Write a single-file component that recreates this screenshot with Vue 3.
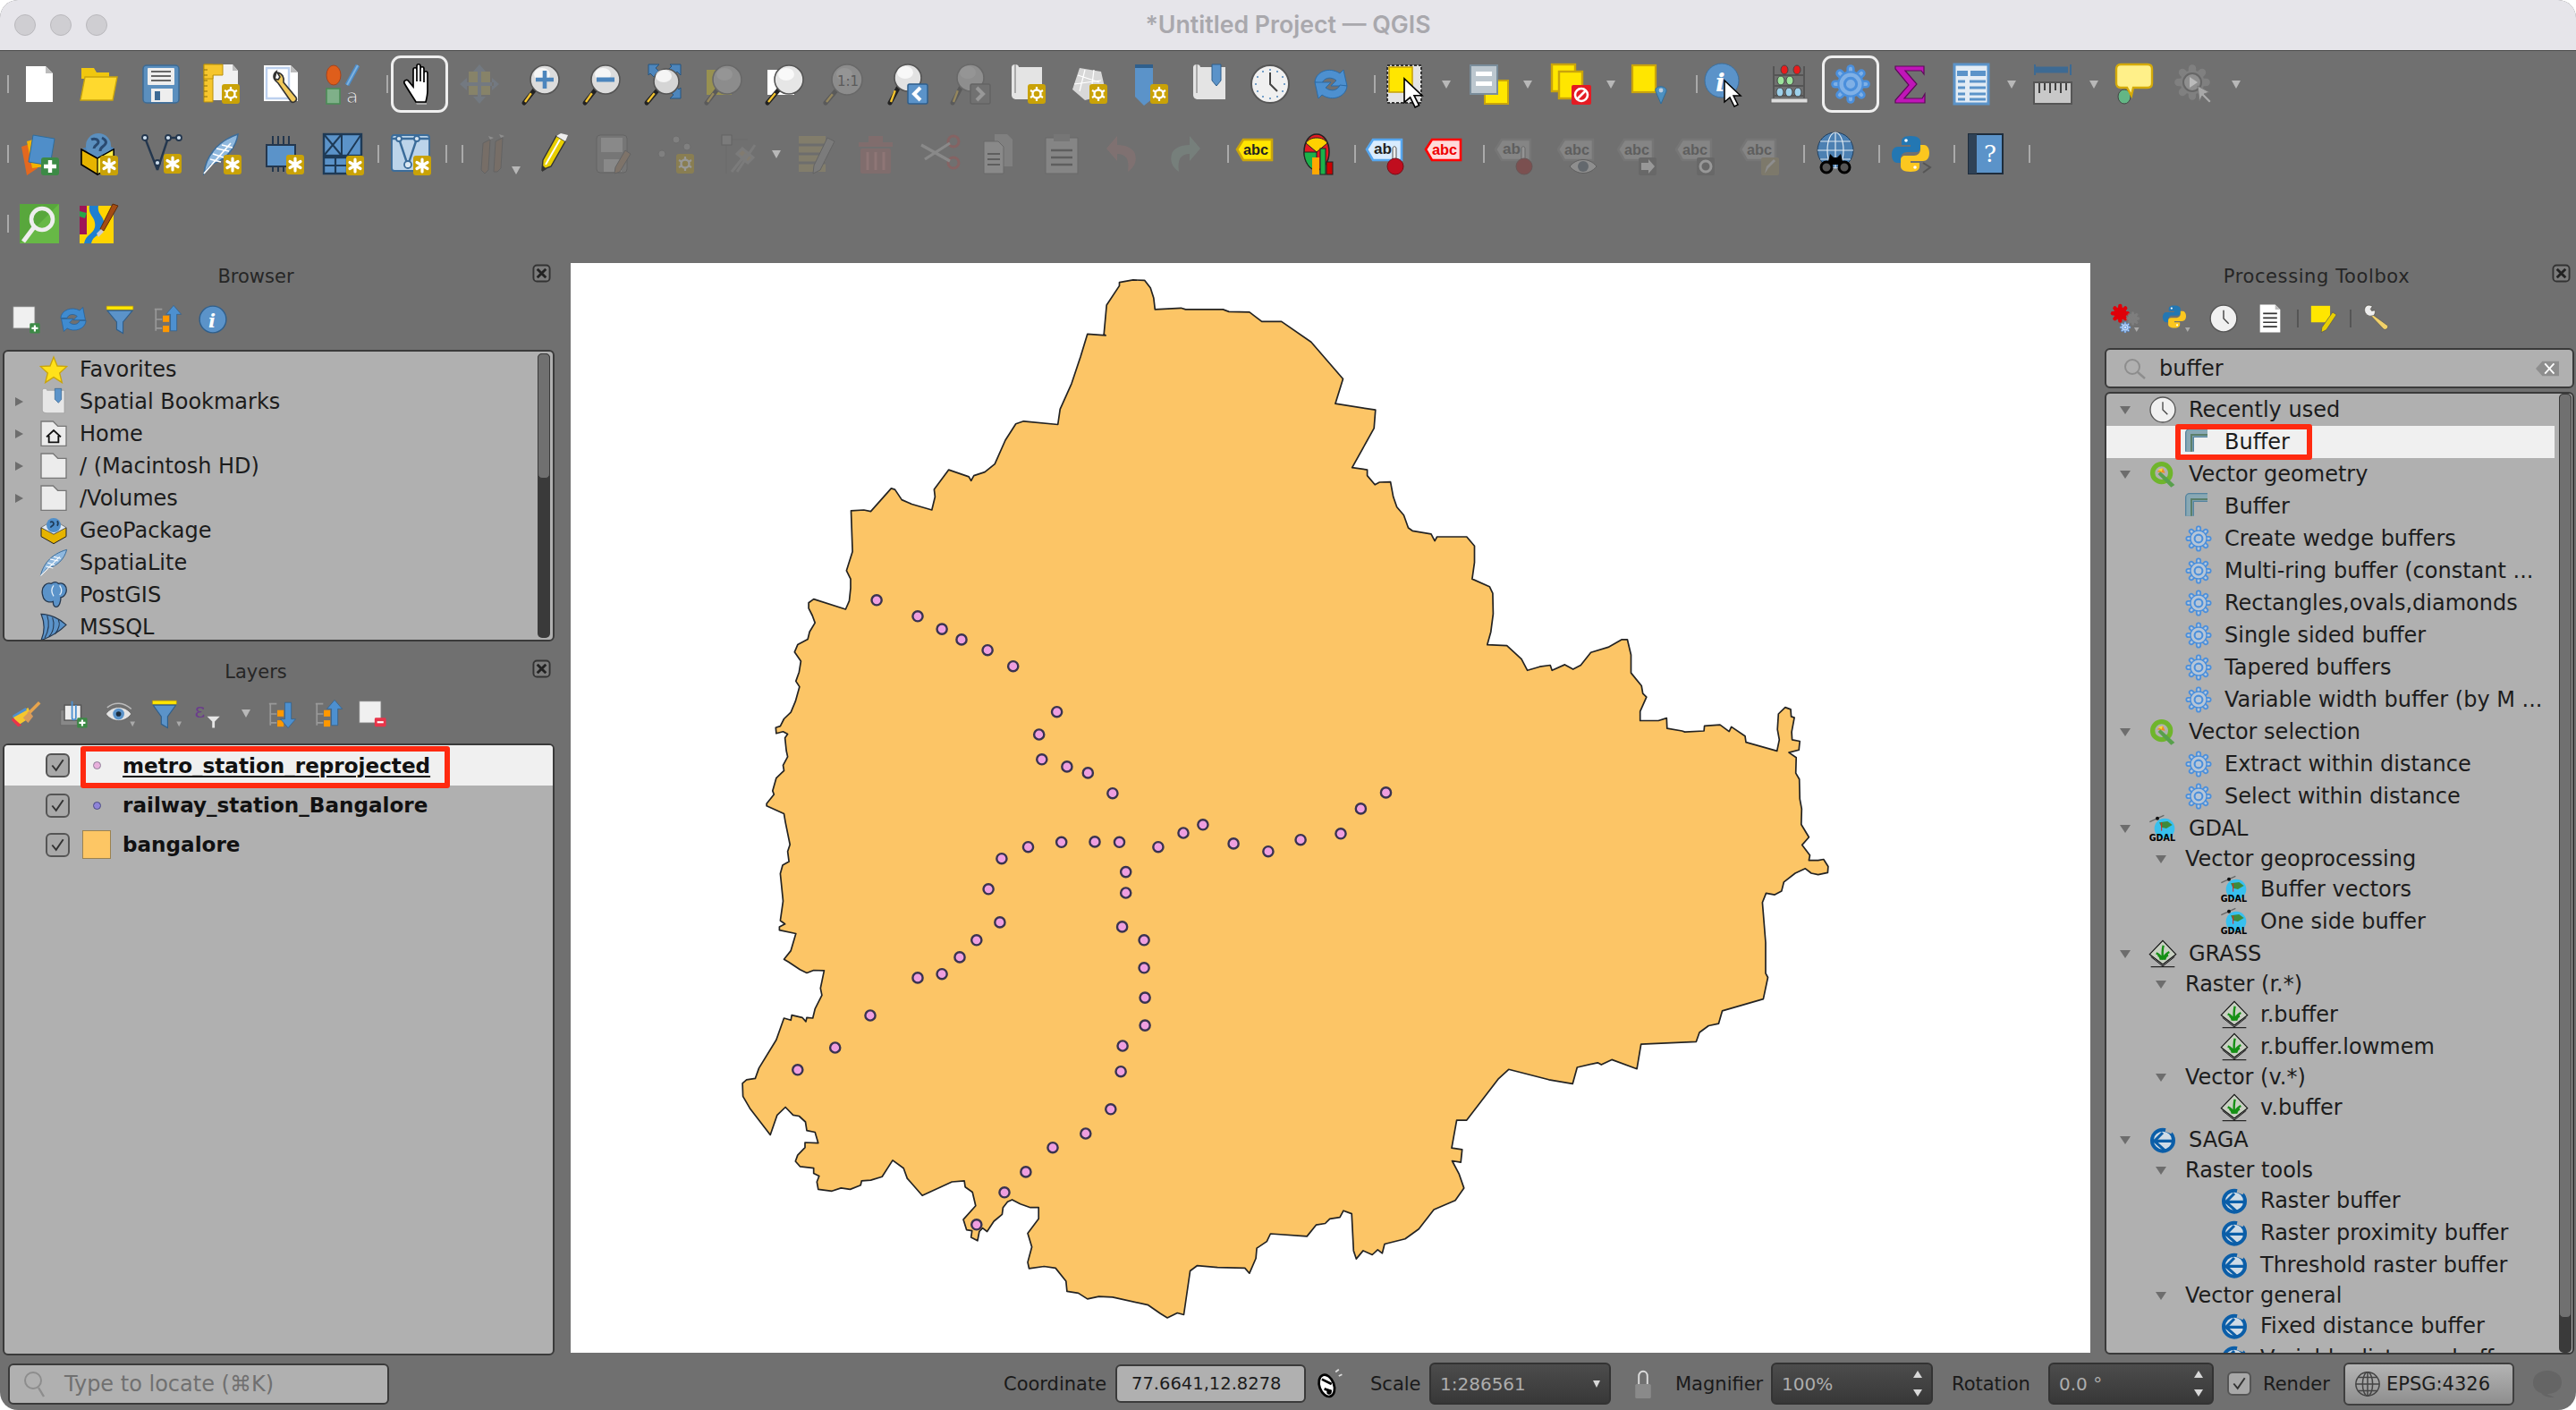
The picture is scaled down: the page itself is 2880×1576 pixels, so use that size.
<template>
  <div class="app">
    <header class="titlebar">
      <div class="lights"><i></i><i></i><i></i></div>
      <div class="title">*Untitled Project — QGIS</div>
    </header>

    <!-- main toolbars -->
    <div class="toolbars">
      <div v-for="(row, r) in toolbarRows" :key="r" class="tool-row">
        <template v-for="item in row" :key="item.key">
          <span v-if="item.name === 'sep'" class="sep" :style="{ marginLeft: item.ml + 'px' }"></span>
          <span v-else-if="item.name === 'arrow'" class="menu-arrow" :style="{ marginLeft: item.ml + 'px' }"></span>
          <span v-else-if="item.name === 'arrowlow'" class="menu-arrow low" :style="{ marginLeft: item.ml + 'px' }"></span>
          <svg
            v-else
            class="tool-icon"
            :class="{ dim: dimIcons.has(item.name), active: item.name === 'hand' || item.name === 'procgear' }"
            :style="{ marginLeft: item.ml + 'px' }"
            viewBox="0 0 48 48"
            v-html="icons[item.name]"
          ></svg>
        </template>
      </div>
    </div>

    <div class="workspace">
      <!-- left docks -->
      <aside class="dock left">
        <div class="dock-title"><span>Browser</span><svg class="close" viewBox="0 0 22 22" v-html="closeIcon"></svg></div>
        <div class="dock-tools browser-tools">
          <template v-for="item in browserTools" :key="item.key">
            <svg class="small-icon" :style="{ marginLeft: item.ml + 'px' }" viewBox="0 0 48 48" v-html="icons[item.name]"></svg>
          </template>
        </div>
        <div class="tree browser-tree">
          <div v-for="row in browserRows" :key="row.text" class="browser-row">
            <span class="twist" :class="{ closed: row.arrow }"></span>
            <svg class="row-icon" viewBox="0 0 48 48" v-html="icons[row.icon]"></svg>
            <span class="row-text">{{ row.text }}</span>
          </div>
          <div class="scrollbar"><div class="thumb browser-thumb"></div></div>
        </div>

        <div class="dock-title layers-title"><span>Layers</span><svg class="close" viewBox="0 0 22 22" v-html="closeIcon"></svg></div>
        <div class="dock-tools layer-tools">
          <template v-for="item in layerTools" :key="item.key">
            <span v-if="item.name === 'arrow'" class="menu-arrow" :style="{ marginLeft: item.ml + 'px' }"></span>
            <svg v-else class="small-icon" :style="{ marginLeft: item.ml + 'px' }" viewBox="0 0 48 48" v-html="icons[item.name]"></svg>
          </template>
        </div>
        <div class="tree layer-tree">
          <div v-for="(layer, i) in layers" :key="layer.name" class="layer-row" :class="{ selected: i === 0 }">
            <span class="check"><svg viewBox="0 0 26 26"><path d="M6 13l5 6 9-13" fill="none" stroke="#333" stroke-width="2.2" /></svg></span>
            <span class="symbol">
              <span v-if="layer.swatch" class="swatch"></span>
              <span v-else class="dot" :class="layer.dot"></span>
            </span>
            <span class="layer-name" :class="{ underlined: i === 0 }">{{ layer.name }}</span>
            <span v-if="i === 0" class="red-box layer-red"></span>
          </div>
        </div>
      </aside>

      <!-- map canvas -->
      <main class="canvas">
        <svg class="map" viewBox="638 294 1699 1218">
          <path :d="outline" fill="#fcc566" stroke="#232323" stroke-width="1.7" stroke-linejoin="round" />
          <circle
            v-for="(p, i) in stations"
            :key="i"
            :cx="p[0]"
            :cy="p[1]"
            r="5.6"
            fill="#ef9fe0"
            stroke="#3a3350"
            stroke-width="2.4"
          />
        </svg>
      </main>

      <!-- processing toolbox -->
      <aside class="dock right">
        <div class="dock-title"><span>Processing Toolbox</span><svg class="close" viewBox="0 0 22 22" v-html="closeIcon"></svg></div>
        <div class="dock-tools toolbox-tools">
          <template v-for="item in toolboxTools" :key="item.key">
            <span v-if="item.name === 'sep'" class="sep dark" :style="{ marginLeft: item.ml + 'px' }"></span>
            <svg v-else class="small-icon" :style="{ marginLeft: item.ml + 'px' }" viewBox="0 0 48 48" v-html="icons[item.name]"></svg>
          </template>
        </div>
        <div class="search">
          <svg class="search-icon" viewBox="0 0 26 26"><circle cx="11" cy="11" r="8" fill="none" stroke="#8d8d8d" stroke-width="2" /><path d="M17 17l8 7" stroke="#8d8d8d" stroke-width="2.4" /></svg>
          <span class="search-text">buffer</span>
          <svg class="clear" viewBox="0 0 28 18"><path d="M0 9L8 0h20v18H8z" fill="#8e8e8e" /><path d="M11 3l11 12M22 3L11 15" stroke="#fff" stroke-width="2" /></svg>
        </div>
        <div class="tree toolbox-tree">
          <div v-for="row in toolboxRows" :key="row.key" class="tb-row" :class="['lv-' + row.level, { selected: row.sel }]">
            <span v-if="row.level === 0 || row.level === 'sub'" class="twist open"></span>
            <svg v-if="row.icon" class="row-icon" viewBox="0 0 48 48" v-html="icons[row.icon]"></svg>
            <span class="row-text">{{ row.text }}</span>
            <span v-if="row.sel" class="red-box tb-red"></span>
          </div>
          <div class="scrollbar tb-scroll"><div class="thumb tb-thumb"></div></div>
        </div>
      </aside>
    </div>

    <footer class="statusbar">
      <div class="locator">
        <svg class="loc-icon" viewBox="0 0 26 34"><circle cx="12" cy="13" r="9" fill="none" stroke="#8d8d8d" stroke-width="2" /><path d="M18 21l6 10" stroke="#8d8d8d" stroke-width="2.4" /></svg>
        <span>Type to locate (⌘K)</span>
      </div>
      <span class="st-label coord-label">Coordinate</span>
      <div class="coord-input">77.6641,12.8278</div>
      <svg class="mouse-icon" viewBox="0 0 34 40" v-html="mouseIcon"></svg>
      <span class="st-label scale-label">Scale</span>
      <div class="dark-field scale-field"><span>1:286561</span><i class="combo-arrow"></i></div>
      <svg class="lock-icon" viewBox="0 0 24 40"><path d="M6 20V9c0-9 12-9 12 0v11" fill="none" stroke="#ddd" stroke-width="2.4" /><rect x="1" y="20" width="22" height="20" rx="2" fill="#8a8a8a" /></svg>
      <span class="st-label mag-label">Magnifier</span>
      <div class="dark-field mag-field"><span>100%</span><i class="spin"></i></div>
      <span class="st-label rot-label">Rotation</span>
      <div class="dark-field rot-field"><span>0.0 °</span><i class="spin"></i></div>
      <span class="check render-check"><svg viewBox="0 0 26 26"><path d="M6 13l5 6 9-13" fill="none" stroke="#333" stroke-width="2.2" /></svg></span>
      <span class="st-label render-label">Render</span>
      <div class="epsg">
        <svg viewBox="0 0 32 32" v-html="crsIcon"></svg>
        <span>EPSG:4326</span>
      </div>
      <svg class="msg-icon" viewBox="0 0 34 32"><path d="M17 1c9 0 16 5 16 13s-7 13-16 13h-1l9 4c-8 0-13-2-15-5C4 24 1 20 1 14 1 6 8 1 17 1z" fill="#656565" /></svg>
    </footer>
  </div>
</template>

<script setup>
// --- small svg helpers for the qgis icon set (48 x 48 grid) ---
const badge = (x = 27, y = 25) => {
  const cx = x + 10
  const cy = y + 11
  return `<rect x="${x}" y="${y}" width="20" height="22" rx="3" fill="#c9a207"/><path d="M${cx} ${cy - 7}v14M${cx - 6} ${cy - 3.5}l12 7M${cx - 6} ${cy + 3.5}l12-7" stroke="#fff" stroke-width="3.2" stroke-linecap="round"/>`
}
const gearBadge = (x = 27, y = 25) => {
  const cx = x + 10
  const cy = y + 11
  return `<rect x="${x}" y="${y}" width="20" height="22" rx="3" fill="#c9a207"/><path d="M${cx} ${cy - 8}v16M${cx - 7} ${cy - 4}l14 8M${cx - 7} ${cy + 4}l14-8" stroke="#fff" stroke-width="2.2"/><circle cx="${cx}" cy="${cy}" r="4.5" fill="#c9a207" stroke="#fff" stroke-width="2.4"/>`
}
const lens = (fill = '#dcdcdc', cx = 27, cy = 19, r = 16) =>
  `<path d="M${cx - r * 0.7} ${cy + r * 0.7}L4 45" stroke="#222" stroke-width="5" stroke-linecap="round"/><path d="M${cx - r * 0.95} ${cy + r * 0.95}L5 44" stroke="#f4c430" stroke-width="2.4"/><circle cx="${cx}" cy="${cy}" r="${r}" fill="${fill}" stroke="#555" stroke-width="1.6"/><ellipse cx="${cx - 3}" cy="${cy - 6}" rx="9" ry="7" fill="#fff" opacity=".75"/>`
const cog = (cx, cy, R, line = '#4a8fdc', fill = '#b6c6d8') => {
  let out = ''
  for (let a = 0; a < 8; a++) {
    const t = (a * Math.PI) / 4
    const x = (cx + Math.cos(t) * R * 0.78).toFixed(1)
    const y = (cy + Math.sin(t) * R * 0.78).toFixed(1)
    out += `<path d="M${cx} ${cy}L${x} ${y}" stroke="${line}" stroke-width="${R * 0.42}" stroke-linecap="round"/>`
  }
  for (let a = 0; a < 8; a++) {
    const t = (a * Math.PI) / 4
    const x = (cx + Math.cos(t) * R * 0.78).toFixed(1)
    const y = (cy + Math.sin(t) * R * 0.78).toFixed(1)
    out += `<path d="M${cx} ${cy}L${x} ${y}" stroke="${fill}" stroke-width="${R * 0.18}" stroke-linecap="round"/>`
  }
  return `${out}<circle cx="${cx}" cy="${cy}" r="${R * 0.62}" fill="${fill}" stroke="${line}" stroke-width="${R * 0.1}"/><circle cx="${cx}" cy="${cy}" r="${R * 0.3}" fill="none" stroke="${line}" stroke-width="${R * 0.14}"/>`
}
const cursor = (x, y, s = 1) =>
  `<path transform="translate(${x} ${y}) scale(${s})" d="M0 0v24l6-5 5 10 4-2-5-10h8z" fill="#fff" stroke="#000" stroke-width="1.5"/>`
const abcTag = (word, fill, edge, ink, tx = 8, ty = 25) =>
  `<path d="M1 19L8 8h32v23H8z" fill="${fill}" stroke="${edge}" stroke-width="2.6"/><text x="${tx}" y="${ty}" font-family="Liberation Sans" font-size="16" font-weight="700" fill="${ink}" textLength="28" lengthAdjust="spacingAndGlyphs">${word}</text>`
const python =
  '<g><path d="M24 4c-8 0-10 3-10 6v4h10v2H10c-4 0-7 3-7 9s3 9 6 9h4v-5c0-4 3-7 7-7h10c3 0 5-2 5-5v-7c0-3-3-6-11-6z" fill="#2377b3"/><circle cx="19" cy="9" r="1.8" fill="#fff"/></g><g transform="rotate(180 24 24)"><path d="M24 4c-8 0-10 3-10 6v4h10v2H10c-4 0-7 3-7 9s3 9 6 9h4v-5c0-4 3-7 7-7h10c3 0 5-2 5-5v-7c0-3-3-6-11-6z" fill="#fcc71f"/><circle cx="19" cy="9" r="1.8" fill="#fff"/></g>'
const clock = (r = 20) =>
  `<circle cx="24" cy="24" r="${r}" fill="#f0f0f0" stroke="#555" stroke-width="2"/><path d="M24 11v13l8 8" fill="none" stroke="#444" stroke-width="2"/>`

const icons = {
  new: '<path d="M9 4h22l8 8v32H9z" fill="#fff"/><path d="M31 4l8 8h-8z" fill="#bbb"/>',
  open: '<path d="M4 6h14l3 5h14v7H4z" fill="#f0c70f"/><path d="M8 16h36l-5 26H3z" fill="#ffd92e" stroke="#c9a40c" stroke-width="1.4"/>',
  save: '<rect x="4" y="3" width="40" height="42" rx="4" fill="#5b8fbe" stroke="#3c6a94" stroke-width="1.5"/><rect x="9" y="6" width="30" height="19" rx="1" fill="#eee"/><path d="M13 10h22M13 15h22M13 20h22" stroke="#666" stroke-width="2"/><rect x="13" y="29" width="24" height="15" fill="#eee"/><rect x="17" y="32" width="6" height="10" fill="#3c6a94"/>',
  layout: `<path d="M6 2h30l6 7v33H6z" fill="#fff" opacity=".9"/><path d="M36 2l6 7h-6z" fill="#bbb"/><path d="M4 2h10v42H4z" fill="#f6c62d" stroke="#b8900b"/><path d="M4 2h21v12H14v4H4z" fill="#f6c62d" stroke="#b8900b"/><path d="M4 8h4M4 14h4M4 20h4M4 26h4M4 32h4M4 38h4" stroke="#8a6d07" stroke-width="1.2"/>${gearBadge(24, 24)}`,
  layoutmgr: '<path d="M4 3h30l8 8v32H4z" fill="#fff"/><path d="M34 3l8 8h-8z" fill="#bbb"/><path d="M7 6h25v34H7z" fill="none" stroke="#bcd0ee" stroke-width="2.4"/><path d="M18 10c-4 3-4 8 0 11l2 2 14 20c2 3 8 0 6-4L26 22c1-5-1-10-7-11l3 5-2 3-4-1z" fill="#f1c95b" stroke="#333" stroke-width="1.6"/>',
  stylemgr: '<ellipse cx="13" cy="14" rx="8" ry="11" fill="#df5e1b" stroke="#a8431a"/><path d="M28 25L40 3" stroke="#4d8bc6" stroke-width="5"/><path d="M28 25L40 3" stroke="#7fb3e0" stroke-width="2"/><rect x="5" y="29" width="15" height="17" fill="#7fb089" stroke="#4b8b57" stroke-width="1.6"/><text x="27" y="45" font-family="DejaVu Sans" font-size="22" fill="#e8e8e8" stroke="#555" stroke-width=".6">a</text>',
  hand: '<path d="M20 44C17 39 9 27 7 23c-1-3 3-5 5-2l5 6V8c0-3 4-3 4 0v13V4c0-3 4-3 4 0v17V7c0-3 4-3 4 0v15V12c0-3 4-3 4 0v19c0 5-1 9-2 13z" fill="#fff" stroke="#000" stroke-width="1.7"/><path d="M20 45h12v2H21z" fill="#aaa"/>',
  pansel: '<rect x="12" y="10" width="24" height="26" fill="#c2b45a"/><path d="M24 2l7 8H17zM24 46l-7-8h14zM2 24l8-7v14zM46 24l-8-7v14zM22 10h4v28h-4zM8 22h32v4H8z" fill="#7b93ad"/>',
  zoomin: `${lens()}<path d="M27 9v20M17 19h20" stroke="#4d86bd" stroke-width="4.6"/>`,
  zoomout: `${lens()}<path d="M17 19h20" stroke="#4d86bd" stroke-width="5"/>`,
  zoomfull: `<path d="M6 2h12l-4 4 6 6-6 6-6-6-2 2zM42 2v12l-4-4-6 6-6-6 6-6-2-2zM42 40H30l4-4-6-6 6-6 6 6 2-2z" fill="#4d86bd" stroke="#27557f"/>${lens('#d5d5d5', 26, 21, 14)}`,
  zoomsel: `<rect x="4" y="8" width="28" height="28" fill="#ffe600"/>${lens('#d5d5d5', 27, 19, 16)}`,
  zoomlayer: `<rect x="4" y="8" width="30" height="28" fill="#fff"/>${lens('#e6e6e6', 28, 19, 16)}`,
  zoomnative: `${lens('#d5d5d5', 28, 19, 17)}<text x="17" y="26" font-family="DejaVu Sans" font-size="15" fill="#222">1:1</text>`,
  zoomlast: `${lens('#e2e2e2', 24, 17, 15)}<rect x="24" y="24" width="22" height="22" rx="2" fill="#5b93c9" stroke="#2f5f8c" stroke-width="1.5"/><path d="M38 28l-7 7 7 7" fill="none" stroke="#fff" stroke-width="4"/>`,
  zoomnext: `${lens('#dcdcdc', 24, 17, 15)}<rect x="24" y="24" width="22" height="22" rx="2" fill="#777" stroke="#444" stroke-width="1.5"/><path d="M31 28l7 7-7 7" fill="none" stroke="#fff" stroke-width="4"/>`,
  newmap: `<path d="M6 5c0-4 8-4 8 0h26v36H12c-4 0-6-2-6-5z" fill="#e4e4e4"/><path d="M10 2v32" stroke="#aaa" stroke-width="2"/>${gearBadge(24, 24)}`,
  new3d: `<path d="M14 6l24 4 6 26-24 6L6 30z" fill="#d8d8d8"/><path d="M12 14l24 8M20 8l-6 24M30 8l-4 32M8 24l30-4" stroke="#fff" stroke-width="1.2" fill="none"/>${gearBadge(25, 24)}`,
  newbook: `<path d="M8 2h20v38l-10 8-10-10z" fill="#5b93c9"/><path d="M8 2h20v4H8z" fill="#2f5f8c"/>${gearBadge(25, 24)}`,
  showbook: '<path d="M6 5c0-4 8-4 8 0h28v36H12c-4 0-6-2-6-5z" fill="#e4e4e4"/><path d="M10 2v32" stroke="#aaa" stroke-width="2"/><path d="M27 2h10v18l-5 6-5-6z" fill="#5b93c9" stroke="#2f5f8c"/>',
  clock: `${clock(21)}<g fill="#4d86bd"><circle cx="24" cy="8" r="1"/><circle cx="40" cy="24" r="1"/><circle cx="24" cy="40" r="1"/><circle cx="8" cy="24" r="1"/><circle cx="32" cy="10" r="1"/><circle cx="38" cy="16" r="1"/><circle cx="38" cy="32" r="1"/><circle cx="32" cy="38" r="1"/><circle cx="16" cy="38" r="1"/><circle cx="10" cy="32" r="1"/><circle cx="10" cy="16" r="1"/><circle cx="16" cy="10" r="1"/></g>`,
  refresh: '<path d="M6 22C7 10 22 4 34 12l4-4 4 18H24l6-6c-6-5-14-3-16 3z" fill="#4d90d0" stroke="#2b6ba6"/><path d="M42 26c-1 12-16 18-28 10l-4 4-4-18h18l-6 6c6 5 14 3 16-3z" fill="#4d90d0" stroke="#2b6ba6"/>',
  select: `<rect x="3" y="3" width="38" height="42" fill="#e4e4e4" stroke="#333" stroke-width="2" stroke-dasharray="3 2"/><rect x="5" y="5" width="26" height="28" fill="#ffe600" stroke="#c9a40c" stroke-width="1.6"/>${cursor(22, 18, 1.1)}`,
  selectby: '<rect x="20" y="20" width="26" height="26" fill="#ffe600" stroke="#c9a40c" stroke-width="2"/><rect x="4" y="3" width="30" height="32" fill="#bcc7cf" stroke="#7a8d9b" stroke-width="2"/><path d="M10 10h18v5H10zM10 21h18v5H10z" fill="#fff"/>',
  deselect: '<rect x="3" y="2" width="26" height="30" fill="#ffe600" stroke="#c9a40c" stroke-width="2.4"/><rect x="11" y="10" width="26" height="30" fill="#ffe600" stroke="#c9a40c" stroke-width="2.4"/><rect x="25" y="25" width="22" height="22" rx="2" fill="#e41b23"/><circle cx="36" cy="36" r="7" fill="none" stroke="#fff" stroke-width="2.6"/><path d="M31 41l10-10" stroke="#fff" stroke-width="2.6"/>',
  selectloc: '<rect x="4" y="3" width="26" height="30" fill="#ffe600" stroke="#c9a40c" stroke-width="2.2"/><path d="M36 46l-6-14c-2-7 13-7 12 0z" fill="#4d90c0" stroke="#2f6d9c"/><circle cx="36" cy="31" r="2.4" fill="#bcd"/>',
  identify: `<circle cx="20" cy="20" r="19" fill="#5b93c9" stroke="#3a6f9f"/><text x="13" y="32" font-family="DejaVu Serif" font-style="italic" font-weight="700" font-size="28" fill="#fff">i</text>${cursor(23, 20, 1)}`,
  abacus: '<path d="M7 4v38M41 4v38M7 14h34M7 26h34M7 37h34" stroke="#555" stroke-width="2"/><rect x="4" y="40" width="41" height="5" fill="#ddd" stroke="#666"/><g stroke="#444"><ellipse cx="19" cy="8" rx="4" ry="5" fill="#e81c1c"/><ellipse cx="33" cy="8" rx="4" ry="5" fill="#e81c1c"/><ellipse cx="15" cy="20" rx="4" ry="5" fill="#9ce39c"/><ellipse cx="25" cy="20" rx="4" ry="5" fill="#9ce39c"/><ellipse cx="14" cy="33" rx="4" ry="5" fill="#9dd0ea"/><ellipse cx="24" cy="33" rx="4" ry="5" fill="#9dd0ea"/><ellipse cx="34" cy="33" rx="4" ry="5" fill="#9dd0ea"/></g>',
  procgear: cog(24, 24, 22, '#4a8fdc', '#7fb0e6'),
  sigma: '<path d="M7 4h32v9l-3-4H18l13 15-14 16h20l3-5v10H7v-3l15-17L7 7z" fill="#c015b8" stroke="#5d0a5a" stroke-width="1.2"/>',
  table: '<rect x="5" y="2" width="38" height="44" fill="#e3ecf5" stroke="#5b93c9" stroke-width="3"/><path d="M8 9h12v6H8zM23 9h17v6H23z" fill="#5b93c9"/><path d="M9 21h8M22 21h18M9 28h8M22 28h18M9 35h8M22 35h18M9 41h8M22 41h18" stroke="#5b93c9" stroke-width="3"/>',
  ruler: '<path d="M5 8h36" stroke="#3d6a93" stroke-width="7"/><path d="M4 2v12M44 2v12" stroke="#3d6a93" stroke-width="2"/><rect x="3" y="22" width="42" height="24" fill="#c8c8c8" stroke="#555" stroke-width="2"/><path d="M9 23v11M15 23v8M21 23v11M27 23v8M33 23v11M39 23v8" stroke="#333" stroke-width="1.8"/>',
  tip: '<ellipse cx="12" cy="38" rx="7" ry="8" fill="#63b685" stroke="#444"/><path d="M8 2h30c3 0 5 2 5 5v16c0 3-2 5-5 5H22l-2 9-5-9H8c-3 0-5-2-5-5V7c0-3 2-5 5-5z" fill="#fff089" stroke="#d4aa0a" stroke-width="2.4"/>',
  action: `<g opacity=".7">${cog(22, 22, 20, '#888', '#888')}</g><circle cx="22" cy="22" r="10" fill="#8f8f8f" stroke="#666" stroke-width="2"/><path d="M19 16v12l9-6z" fill="#bbb"/><path d="M28 26l2 17 3-6 8 8 2-2-8-8 6-2z" fill="#a8a8a8" stroke="#777"/>`,
  source: '<path d="M4 16l12-4 6 28-12 8z" fill="#e3681f"/><path d="M10 10l14-4 6 32-14 2z" fill="#f3b200"/><path d="M17 3l24 4-5 30-24-4z" fill="#4f8ec9" stroke="#2f6d9c"/><rect x="26" y="28" width="20" height="20" rx="3" fill="#3c8a46"/><path d="M36 31v14M29 38h14" stroke="#fff" stroke-width="4.4"/>',
  gpkg: `<path d="M4 18l22-8 14 8-18 9z" fill="#4b80b4"/><circle cx="22" cy="15" r="14" fill="#5b8fbe"/><path d="M14 8c4-2 8 0 8 3s-5 3-5 7M26 6c4 2 6 5 3 8s-5 3-5 7" fill="none" stroke="#2a4a70" stroke-width="3"/><path d="M3 19l18 10 18-10v18L21 47 3 36z" fill="#e6b400" stroke="#000" stroke-width="1.6"/><path d="M21 29v18L39 37V19z" fill="#ffef4a" stroke="#000" stroke-width="1.2"/>${badge(24, 26)}`,
  vector: `<path d="M5 6l14 36M19 42L31 6M31 6h12" fill="none" stroke="#24374e" stroke-width="2.4"/><g fill="#cfe0ef" stroke="#24374e" stroke-width="1.8"><circle cx="5" cy="6" r="3"/><circle cx="19" cy="34" r="3"/><circle cx="31" cy="6" r="3"/><circle cx="43" cy="6" r="3"/></g>${badge(26, 24)}`,
  spatialite: `<path d="M4 46C6 28 18 10 42 2 40 16 30 30 12 36z" fill="#8fb8de" stroke="#3b6c9a" stroke-width="1.5"/><path d="M4 46L34 12M14 24l12 4M18 18l14 3M24 14l12 3M11 30l12 3" stroke="#fff" stroke-width="1.6"/>${badge(26, 25)}`,
  spatialiteplain: '<path d="M2 46C6 28 18 10 46 2 42 18 30 30 12 34z" fill="#8fb8de" stroke="#3b6c9a" stroke-width="1.5"/><path d="M2 46L34 14M14 24l12 4M18 18l14 3M24 14l12 3M11 30l12 3" stroke="#fff" stroke-width="1.6"/>',
  temp: `<rect x="4" y="14" width="32" height="24" fill="#5b93c9" stroke="#24374e" stroke-width="2"/><path d="M11 4v10M17 4v10M23 4v10M29 4v10M11 38v6M17 38v6M23 38v6" stroke="#24374e" stroke-width="2"/>${badge(26, 25)}`,
  virtual: `<rect x="2" y="2" width="42" height="24" fill="#5b93c9" stroke="#1e3a56" stroke-width="2.4"/><path d="M22 2v24M2 2l20 24M22 2L2 26M44 2L28 26" stroke="#1e3a56" stroke-width="2"/><rect x="2" y="28" width="26" height="18" fill="#5b93c9" stroke="#1e3a56" stroke-width="2.4"/><path d="M15 28v18M2 37h26" stroke="#1e3a56" stroke-width="2.2"/>${badge(27, 26)}`,
  mesh: `<rect x="3" y="3" width="42" height="40" rx="3" fill="#bcd4ea" stroke="#3b6c9a" stroke-width="1.8"/><path d="M11 7l10 30M21 37L31 7M3 7h42" fill="none" stroke="#3b6c9a" stroke-width="2.4"/><g fill="#dbe8f3" stroke="#3b6c9a" stroke-width="1.8"><circle cx="11" cy="7" r="3"/><circle cx="21" cy="36" r="4"/><circle cx="31" cy="7" r="3"/></g>${badge(27, 26)}`,
  pencils: '<path d="M8 42l2-30 8-4-2 34-4 4zM22 44l2-34 8-4-2 34-4 4z" fill="#8a6a50" stroke="#444"/><path d="M18 8l-2-4 6 2M30 6l-2-4 6 2" fill="#ddd"/>',
  pencil: '<path d="M26 4l10 6-16 28-10 4 1-11z" fill="#e8cf00" stroke="#333" stroke-width="1.4"/><path d="M26 4l10 6 3-7-8-2z" fill="#eee"/><path d="M30 8L14 36" stroke="#fff" stroke-width="2"/><path d="M10 36v8l5-3z" fill="#333"/>',
  saveedit: '<rect x="4" y="3" width="34" height="42" rx="4" fill="#888" stroke="#444"/><rect x="9" y="6" width="24" height="16" fill="#ccc"/><rect x="12" y="30" width="20" height="14" fill="#ccc"/><path d="M36 20l6 4-12 20-6 2 1-7z" fill="#a47c5a" stroke="#444"/>',
  digitize: `<g fill="#aaa" stroke="#666"><circle cx="24" cy="8" r="4"/><circle cx="36" cy="16" r="4"/><circle cx="8" cy="24" r="4"/></g>${gearBadge(24, 24)}`,
  vertex: '<path d="M12 6v40M12 8h24" stroke="#666" stroke-width="1.6"/><rect x="7" y="3" width="11" height="11" fill="#999" stroke="#444"/><path d="M18 44l16-20M30 18l12 10-6 6-12-10zM44 14L24 44" stroke="#999" stroke-width="3" fill="#b09a70"/>',
  attredit: '<rect x="2" y="4" width="30" height="40" fill="#b0a060"/><path d="M2 14h30M2 24h30M2 34h30" stroke="#666" stroke-width="3"/><path d="M34 6l8 4-16 32-8 4 1-9z" fill="#999" stroke="#444"/>',
  trash: '<rect x="5" y="18" width="34" height="28" rx="2" fill="#a66"/><path d="M3 11h38v5H3zM14 4h16v7H14z" fill="#a66"/><path d="M13 22v20M22 22v20M31 22v20" stroke="#d88" stroke-width="3"/>',
  cut: '<circle cx="38" cy="10" r="6" fill="none" stroke="#b44" stroke-width="3"/><circle cx="38" cy="34" r="6" fill="none" stroke="#b44" stroke-width="3"/><path d="M2 14l32 18M6 30l28-18" stroke="#ccc" stroke-width="3.2"/>',
  copy: '<path d="M18 2h14l6 6v30H18z" fill="#aaa"/><path d="M6 10h16l6 6v30H6z" fill="#ccc" stroke="#555"/><path d="M10 24h14M10 30h14M10 36h14" stroke="#333" stroke-width="2"/>',
  paste: '<rect x="6" y="6" width="36" height="40" fill="#bbb" stroke="#555"/><rect x="15" y="2" width="18" height="8" fill="#888"/><path d="M12 20h24M12 28h24M12 36h24" stroke="#333" stroke-width="2.4"/>',
  undo: '<path d="M16 4L4 18l12 14v-8c10 0 14 6 12 20 8-6 10-12 8-20-2-6-10-10-20-10z" fill="#a77" />',
  redo: '<path d="M32 4l12 14-12 14v-8C22 24 18 30 20 44c-8-6-10-12-8-20 2-6 10-10 20-10z" fill="#8a9" />',
  abc: abcTag('abc', '#ffe500', '#c9a40c', '#222'),
  diagram: '<path d="M22 2c8 0 14 8 14 20 0 10-6 20-14 20S8 32 8 22C8 10 14 2 22 2z" fill="#e41b23" stroke="#222" stroke-width="1.5"/><path d="M22 22L8 22C8 32 14 42 22 42z" fill="#1bb14a" stroke="#222"/><path d="M22 22L10 12C14 4 30 4 34 12z" fill="#ffd000" stroke="#222"/><rect x="17" y="28" width="8" height="19" fill="#ffa800"/><rect x="26" y="18" width="6" height="29" fill="#1bb14a" stroke="#222"/><rect x="33" y="33" width="7" height="14" fill="#c00" stroke="#222"/>',
  pin: `${abcTag('ab', '#d9ecff', '#56a6ee', '#222', 9, 24).replace('textLength="28"', 'textLength="20"')}<path d="M30 18c0-3 4-3 4 0v12h-4z" fill="#eee" stroke="#555"/><circle cx="33" cy="38" r="9" fill="#c00d1e" stroke="#7b0a14"/>`,
  abcred: abcTag('abc', '#ffdada', '#f00', '#e00'),
  abcpin: `${abcTag('ab', '#bbb', '#888', '#333', 9, 24).replace('textLength="28"', 'textLength="20"')}<path d="M30 18c0-3 4-3 4 0v12h-4z" fill="#eee" stroke="#555"/><circle cx="33" cy="38" r="9" fill="#900" stroke="#511"/>`,
  abceye: `${abcTag('abc', '#bbb', '#888', '#333')}<path d="M14 38c8-10 22-10 30 0-8 10-22 10-30 0z" fill="#ddd" stroke="#333"/><circle cx="29" cy="38" r="6" fill="#456"/>`,
  abcarrow: `${abcTag('abc', '#bbb', '#888', '#333')}<rect x="24" y="28" width="20" height="20" rx="2" fill="#555"/><path d="M27 34h8v-4l7 8-7 8v-4h-8z" fill="#fff"/>`,
  abcrot: `${abcTag('abc', '#bbb', '#888', '#333')}<rect x="24" y="28" width="20" height="20" rx="2" fill="#555"/><circle cx="34" cy="38" r="6" fill="none" stroke="#fff" stroke-width="3"/>`,
  abcpen: `${abcTag('abc', '#bbb', '#888', '#333')}<rect x="24" y="28" width="20" height="20" rx="2" fill="#a09060"/><path d="M28 46l2-8 8-8 2 2-8 8z" fill="#ddd"/>`,
  globe: '<circle cx="24" cy="20" r="20" fill="#4c80b2" stroke="#1f3f60"/><ellipse cx="24" cy="20" rx="9" ry="20" fill="none" stroke="#dde7f0" stroke-width="1.2"/><path d="M4 20h40M7 10h34M7 30h34M24 0v40" stroke="#dde7f0" stroke-width="1.2"/><path d="M18 24l-3 12h18l-3-12-4 4h-4z" fill="#000"/><circle cx="14" cy="39" r="6" fill="#555" stroke="#000" stroke-width="3"/><circle cx="34" cy="39" r="6" fill="#555" stroke="#000" stroke-width="3"/>',
  python: `${python}<path d="M38 34l8 5-8 6" fill="none" stroke="#555" stroke-width="2"/>`,
  pythonplain: python,
  help: '<rect x="5" y="2" width="38" height="44" fill="#5b93c9" stroke="#1e2c3b" stroke-width="2"/><rect x="5" y="2" width="9" height="44" fill="#2f4256"/><text x="22" y="33" font-family="DejaVu Serif" font-size="26" fill="#fff">?</text>',
  locator: '<rect x="2" y="2" width="44" height="44" fill="#67b846"/><path d="M46 2L2 46V2z" fill="#55a339" opacity=".8"/><circle cx="27" cy="19" r="12" fill="none" stroke="#eee" stroke-width="4.6"/><path d="M18 28L6 44" stroke="#eee" stroke-width="5"/>',
  paint: '<rect x="3" y="4" width="38" height="42" fill="#ffd400"/><path d="M3 4h8v32H3z" fill="#9e1457"/><path d="M14 4c-2 12 8 12 6 24-2 8-10 8-12 18h8c2-10 12-8 14-20C32 16 22 14 24 4z" fill="#1e7fd0"/><path d="M3 10l8 2-2 6-6-2z" fill="#2aa54a"/><path d="M46 4L30 32l-4-2L40 2z" fill="#a44c14" stroke="#5c2a0a"/><path d="M27 30l3 3-6 6-2-4z" fill="#ccc"/>',
  addgroup: '<rect x="4" y="4" width="34" height="34" fill="#f0f0f0" stroke="#888"/><rect x="30" y="30" width="16" height="16" rx="2" fill="#3c8a46"/><path d="M38 33v10M33 38h10" stroke="#fff" stroke-width="3"/>',
  removelayer: '<rect x="4" y="4" width="34" height="34" fill="#f0f0f0" stroke="#888"/><rect x="28" y="30" width="18" height="14" rx="2" fill="#e8354a"/><path d="M32 37h10" stroke="#fff" stroke-width="3"/>',
  syncs: '<path d="M4 22C5 9 22 3 34 10l5-5 4 20H24l6-6c-6-5-14-3-16 3z" fill="#3f8bd0" stroke="#1f5f9a"/><path d="M44 26c-1 13-18 19-30 12l-5 5-4-20h19l-6 6c6 5 14 3 16-3z" fill="#3f8bd0" stroke="#1f5f9a"/>',
  filter: '<path d="M3 3h42v6H3z" fill="#ffe600" stroke="#b8950b"/><path d="M4 10h40L29 28v18l-10-6V28z" fill="#5b93c9" stroke="#2f5f8c" stroke-width="1.6"/>',
  collapse: '<path d="M4 8h12M6 8v34M6 24h10M6 38h10" stroke="#999" stroke-width="2.4" fill="none"/><rect x="17" y="18" width="10" height="10" fill="#ff9800"/><rect x="17" y="34" width="10" height="10" fill="#ff9800"/><path d="M34 2l12 14h-7v26h-10V16h-7z" fill="#4d90d0" stroke="#2f5f8c"/>',
  expand: '<path d="M4 8h12M6 8v34M6 24h10M6 38h10" stroke="#999" stroke-width="2.4" fill="none"/><rect x="17" y="18" width="10" height="10" fill="#ff9800"/><rect x="17" y="34" width="10" height="10" fill="#ff9800"/><path d="M34 46l12-14h-7V6h-10v26h-7z" fill="#4d90d0" stroke="#2f5f8c"/>',
  info: '<circle cx="24" cy="24" r="21" fill="#5b93c9" stroke="#2f5f8c" stroke-width="2"/><text x="17" y="37" font-family="DejaVu Serif" font-style="italic" font-weight="700" font-size="30" fill="#fff">i</text>',
  brush: '<path d="M2 28l24-14 6 14L10 42z" fill="#f6c62d"/><path d="M2 30l14 12-6 2L0 34z" fill="#e8354a"/><path d="M2 26l20-12 2 4-22 12z" fill="#4d90d0"/><path d="M26 24L44 6" stroke="#e8a44c" stroke-width="5"/><path d="M18 30l10-10 6 8-8 10z" fill="#d89b5c"/>',
  legend: '<rect x="4" y="18" width="26" height="24" fill="#888" stroke="#666"/><rect x="10" y="10" width="26" height="24" fill="#eee" stroke="#555" stroke-width="2"/><path d="M22 4v26c0 4 6 4 6 0V10" fill="none" stroke="#4d90d0" stroke-width="2.6"/><rect x="30" y="30" width="16" height="16" rx="2" fill="#3c8a46"/><path d="M38 33v10M33 38h10" stroke="#fff" stroke-width="3"/>',
  eye: '<path d="M2 24c10-14 30-14 40 0-10 14-30 14-40 0z" fill="#e4e4e4" stroke="#555"/><circle cx="22" cy="24" r="9" fill="#5b93c9"/><circle cx="22" cy="24" r="4" fill="#1c2c3c"/><path d="M4 14c12-10 26-8 38 2" stroke="#bbb" fill="none" stroke-width="2"/><path d="M40 36h8l-4 8z" fill="#aaa"/>',
  filterm: '<path d="M2 3h38v6H2z" fill="#ffe600" stroke="#b8950b"/><path d="M3 10h36L26 28v18l-10-6V28z" fill="#5b93c9" stroke="#2f5f8c" stroke-width="1.6"/><path d="M40 36h8l-4 8z" fill="#aaa"/>',
  epsilon: '<text x="2" y="30" font-family="DejaVu Serif" font-size="32" fill="#6b3c8c">ε</text><path d="M22 28h20l-8 8v10h-4V36z" fill="#e6e6e6"/>',
  models: `<g>${cog(16, 16, 15, '#e0000a', '#e0000a')}</g><g opacity=".6">${cog(36, 24, 11, '#888', '#888')}</g>${cog(24, 38, 9, '#5b93dc', '#cfe0f5')}<path d="M38 38h8l-4 7z" fill="#aaa"/>`,
  pythonm: `<g transform="scale(.88)">${python}</g><path d="M38 38h8l-4 7z" fill="#aaa"/>`,
  history: clock(21),
  doc: '<path d="M8 2h24l8 8v36H8z" fill="#fff"/><path d="M32 2l8 8h-8z" fill="#bbb"/><path d="M13 16h22M13 23h22M13 30h22M13 37h22" stroke="#333" stroke-width="2.4"/>',
  edit: '<rect x="4" y="4" width="30" height="26" fill="#ffe600"/><path d="M38 14l6 4-16 24-8 4 1-8z" fill="#e8cf00" stroke="#555"/>',
  wrench: '<path d="M4 8c2-6 8-6 12-3l-3 4 2 3 5-1c1 4 0 6-2 8l22 16c2 3-2 8-6 6L14 20c-5 1-12-5-10-12z" fill="#f1d169" stroke="#555"/><path d="M4 8c2-6 8-6 12-3l-3 4 2 3 5-1c1 4 0 6-2 8L14 20c-5 1-12-5-10-12z" fill="#eee" stroke="#555"/>',
  star: '<path d="M24 3l6 15 16 1-12 11 4 16-14-9-14 9 4-16L2 19l16-1z" fill="#ffe11a" stroke="#c9a40c" stroke-width="2"/>',
  bookmarks: '<path d="M5 5c0-4 8-4 8 0h29v38H12c-4 0-7-2-7-5z" fill="#e6e6e6" stroke="#999"/><path d="M26 2h11v18l-5 6-6-6z" fill="#5b93c9" stroke="#2f5f8c"/>',
  home: '<path d="M3 44V3h20l8 8h14v33z" fill="#ececec" stroke="#777" stroke-width="2"/><path d="M12 29l12-11 12 11M16 27v11h16V27" fill="none" stroke="#111" stroke-width="2.8"/>',
  folder: '<path d="M3 44V3h20l8 8h14v33z" fill="#ececec" stroke="#777" stroke-width="2"/>',
  gpkgplain: '<path d="M3 19l21 11 21-11v15L24 46 3 34z" fill="#e6b400" stroke="#222" stroke-width="1.5"/><path d="M3 19L24 6l21 13-21 11z" fill="#dfe8f0" stroke="#555"/><circle cx="24" cy="15" r="12" fill="#4f8ec9"/><path d="M18 10c4-2 6 0 6 3s-5 3-5 6M30 8c2 3 2 5 0 8" fill="none" stroke="#1e3a56" stroke-width="2.6"/>',
  postgis: '<path d="M5 22C3 10 12 2 20 5c4-3 9-3 12 0 8-3 15 4 13 14-1 5-6 9-9 9 0 6-2 16-8 16-4 0-5-4-5-9-6 2-12 0-14-3C6 30 6 27 5 22z" fill="#5b93c9" stroke="#24374e" stroke-width="2"/><path d="M24 8c-4 5-4 12 0 18M34 8c4 6 4 12 0 16" fill="none" stroke="#e0edf8" stroke-width="2"/>',
  mssql: '<path d="M3 46C10 30 8 14 3 2c14 0 32 8 42 18-10 10-26 20-42 26z" fill="#5b93c9" stroke="#24374e" stroke-width="1.8"/><path d="M13 4c4 12 4 24-4 38M22 8c4 10 2 24-6 32M32 12c4 8 0 16-6 24" fill="none" stroke="#24374e" stroke-width="1.6"/>',
  buffer: '<path d="M9 40V9h30" fill="none" stroke="#54839e" stroke-width="15" stroke-linejoin="round"/><path d="M9 40V9h30" fill="none" stroke="#88a8b4" stroke-width="11" stroke-linejoin="round"/><path d="M12 40V12h27" fill="none" stroke="#5b7f6a" stroke-width="3"/>',
  qgis: '<circle cx="22" cy="22" r="15" fill="none" stroke="#6fb52c" stroke-width="8"/><path d="M14 20l10-6 4 8z" fill="#ef8f22"/><path d="M20 20l24 22-6 4-22-22z" fill="#58a04c"/><path d="M16 16l8-2-2 6z" fill="#f5dc35"/>',
  gearblue: cog(24, 24, 22),
  gdal: '<circle cx="27" cy="24" r="17" fill="#38c0ee"/><path d="M18 14l14-2 8 6-10 6-8-2z" fill="#3d8a3c"/><path d="M22 14v14" stroke="#d22" stroke-width="1.5"/><path d="M2 13L26 2" stroke="#666" stroke-width="2"/><circle cx="15" cy="7" r="3" fill="#111"/><text x="1" y="45" font-family="DejaVu Sans" font-weight="700" font-size="16" fill="#000" textLength="44" lengthAdjust="spacingAndGlyphs">GDAL</text>',
  grass: '<path d="M24 2l22 23-22 17L2 25z" fill="#c8d0c2" stroke="#111" stroke-width="1.8"/><path d="M4 29l20 16 20-16" fill="none" stroke="#111" stroke-width="1.5"/><path d="M4 46h40" stroke="#111" stroke-width="1.6"/><path d="M24 34c-1-10-1-16 1-24M24 34c-3-6-6-9-11-11M24 34c2-6 5-10 11-13M21 34c-1-4-3-7-5-8M27 34c1-4 3-7 6-8" fill="none" stroke="#159015" stroke-width="3.6"/>',
  saga: '<circle cx="24" cy="25" r="18" fill="#cfdbe6" stroke="#0b5ea8" stroke-width="6"/><path d="M6 26h36" stroke="#0b5ea8" stroke-width="5"/><path d="M24 12L10 26l20 18" fill="none" stroke="#0b5ea8" stroke-width="4.6"/><path d="M30 2l12 6-4 6-10-4z" fill="#b0b0b0"/>',
}

const dimIcons = new Set([
  'pansel', 'zoomsel', 'zoomnative', 'zoomnext', 'pencils', 'saveedit', 'digitize', 'vertex', 'attredit',
  'trash', 'cut', 'copy', 'paste', 'undo', 'redo', 'abcpin', 'abceye', 'abcarrow', 'abcrot', 'abcpen',
])

// center x of every toolbar item, turned into flow margins
const place = (list, size = 48) => {
  let right = 0
  return list.map(([cx, name], i) => {
    let w = size
    if (name === 'sep') w = 2
    if (name === 'arrow' || name === 'arrowlow') w = 10
    const ml = cx - w / 2 - right
    right = cx + w / 2
    return { key: i + name, name, ml }
  })
}

const toolbarRows = [
  [
    [9, 'sep'], [44, 'new'], [111, 'open'], [180, 'save'], [248, 'layout'], [315, 'layoutmgr'], [384, 'stylemgr'],
    [433, 'sep'], [469, 'hand'], [536, 'pansel'], [606, 'zoomin'], [674, 'zoomout'], [743, 'zoomfull'],
    [810, 'zoomsel'], [878, 'zoomlayer'], [943, 'zoomnative'], [1015, 'zoomlast'], [1085, 'zoomnext'],
    [1149, 'newmap'], [1217, 'new3d'], [1285, 'newbook'], [1352, 'showbook'], [1420, 'clock'], [1488, 'refresh'],
    [1537, 'sep'], [1572, 'select'], [1617, 'arrow'], [1664, 'selectby'], [1708, 'arrow'], [1756, 'deselect'],
    [1801, 'arrow'], [1845, 'selectloc'], [1897, 'sep'], [1929, 'identify'], [2000, 'abacus'], [2069, 'procgear'],
    [2136, 'sigma'], [2204, 'table'], [2249, 'arrow'], [2295, 'ruler'], [2341, 'arrow'], [2387, 'tip'],
    [2453, 'action'], [2500, 'arrow'],
  ],
  [
    [9, 'sep'], [44, 'source'], [112, 'gpkg'], [181, 'vector'], [248, 'spatialite'], [318, 'temp'], [384, 'virtual'],
    [423, 'sep'], [459, 'mesh'], [499, 'sep'], [517, 'sep'], [554, 'pencils'], [577, 'arrowlow'], [620, 'pencil'],
    [687, 'saveedit'], [756, 'digitize'], [824, 'vertex'], [868, 'arrow'], [915, 'attredit'], [981, 'trash'],
    [1052, 'cut'], [1118, 'copy'], [1187, 'paste'], [1257, 'undo'], [1322, 'redo'], [1373, 'sep'], [1406, 'abc'],
    [1474, 'diagram'], [1515, 'sep'], [1551, 'pin'], [1617, 'abcred'], [1659, 'sep'], [1695, 'abcpin'],
    [1765, 'abceye'], [1832, 'abcarrow'], [1897, 'abcrot'], [1969, 'abcpen'], [2017, 'sep'], [2052, 'globe'],
    [2101, 'sep'], [2136, 'python'], [2185, 'sep'], [2220, 'help'], [2269, 'sep'],
  ],
  [[9, 'sep'], [44, 'locator'], [110, 'paint']],
].map((row) => place(row))

// dock toolbars, x relative to the dock's left content edge
const browserTools = place(
  [[26, 'addgroup'], [79, 'syncs'], [131, 'filter'], [184, 'collapse'], [235, 'info']],
  34,
)
const layerTools = place(
  [[27, 'brush'], [79, 'legend'], [131, 'eye'], [183, 'filterm'], [230, 'epsilon'], [272, 'arrow'], [312, 'expand'], [364, 'collapse'], [413, 'removelayer']],
  34,
)
const toolboxTools = place(
  [[23, 'models'], [80, 'pythonm'], [133, 'history'], [185, 'doc'], [216, 'sep'], [245, 'edit'], [275, 'sep'], [305, 'wrench']],
  34,
)

const browserRows = [
  { text: 'Favorites', icon: 'star' },
  { text: 'Spatial Bookmarks', icon: 'bookmarks', arrow: true },
  { text: 'Home', icon: 'home', arrow: true },
  { text: '/ (Macintosh HD)', icon: 'folder', arrow: true },
  { text: '/Volumes', icon: 'folder', arrow: true },
  { text: 'GeoPackage', icon: 'gpkgplain' },
  { text: 'SpatiaLite', icon: 'spatialiteplain' },
  { text: 'PostGIS', icon: 'postgis' },
  { text: 'MSSQL', icon: 'mssql' },
]

const layers = [
  { name: 'metro_station_reprojected', dot: 'pink' },
  { name: 'railway_station_Bangalore', dot: 'violet' },
  { name: 'bangalore', swatch: true },
]

const tbSource = [
  [0, 'Recently used', 'history'],
  [1, 'Buffer', 'buffer', true],
  [0, 'Vector geometry', 'qgis'],
  [1, 'Buffer', 'buffer'],
  [1, 'Create wedge buffers', 'gearblue'],
  [1, 'Multi-ring buffer (constant ...', 'gearblue'],
  [1, 'Rectangles,ovals,diamonds', 'gearblue'],
  [1, 'Single sided buffer', 'gearblue'],
  [1, 'Tapered buffers', 'gearblue'],
  [1, 'Variable width buffer (by M ...', 'gearblue'],
  [0, 'Vector selection', 'qgis'],
  [1, 'Extract within distance', 'gearblue'],
  [1, 'Select within distance', 'gearblue'],
  [0, 'GDAL', 'gdal'],
  ['sub', 'Vector geoprocessing'],
  [2, 'Buffer vectors', 'gdal'],
  [2, 'One side buffer', 'gdal'],
  [0, 'GRASS', 'grass'],
  ['sub', 'Raster (r.*)'],
  [2, 'r.buffer', 'grass'],
  [2, 'r.buffer.lowmem', 'grass'],
  ['sub', 'Vector (v.*)'],
  [2, 'v.buffer', 'grass'],
  [0, 'SAGA', 'saga'],
  ['sub', 'Raster tools'],
  [2, 'Raster buffer', 'saga'],
  [2, 'Raster proximity buffer', 'saga'],
  [2, 'Threshold raster buffer', 'saga'],
  ['sub', 'Vector general'],
  [2, 'Fixed distance buffer', 'saga'],
  [2, 'Variable distance buffer', 'saga'],
]
const toolboxRows = tbSource.map(([level, text, icon, sel], i) => ({ key: i, level, text, icon, sel }))

const closeIcon =
  '<rect x="1.5" y="1.5" width="19" height="19" rx="4" fill="#7c7c7c" stroke="#333" stroke-width="2"/><path d="M6 6l10 10M16 6L6 16" stroke="#222" stroke-width="3"/>'
const mouseIcon =
  '<ellipse cx="14" cy="22" rx="9" ry="14" transform="rotate(-20 14 22)" fill="#fff" stroke="#000" stroke-width="3"/><path d="M8 14l12 6M11 26l9 3" stroke="#000" stroke-width="3"/><circle cx="17" cy="30" r="3" fill="#000"/><path d="M25 5l4-3M29 10l4-2" stroke="#ddd" stroke-width="2"/>'
const crsIcon =
  '<g fill="none" stroke="#444" stroke-width="1.6"><ellipse cx="16" cy="16" rx="14" ry="14"/><ellipse cx="16" cy="16" rx="6" ry="14"/><path d="M2 16h28M5 8h22M5 24h22M16 2v28"/></g>'

// map outline, read from three crops of the reference: each has its own origin and scale
const mapCrop = (flat, ox, oy, sx, sy) => {
  const out = []
  for (let i = 0; i < flat.length; i += 2) out.push([+(ox + flat[i] / sx).toFixed(1), +(oy + flat[i + 1] / sy).toFixed(1)])
  return out
}
const north = mapCrop([
  112,1490,128,1465,125,1455,133,1420,150,1400,148,1385,158,1362,155,1345,152,1310,158,1300,148,1293,133,1298,132,1282,142,1278,150,1258,165,1240,175,1210,184,1170,176,1155,183,1130,187,1100,173,1075,180,1055,202,1040,206,1020,218,995,212,975,204,955,204,940,215,930,285,958,293,935,296,900,296,875,287,852,300,800,297,688,325,686,340,690,385,627,393,630,408,658,430,670,474,686,481,650,479,630,511,576,555,595,560,606,566,592,590,582,612,560,635,495,658,450,675,443,750,452,755,410,780,340,800,265,815,204,855,208,851,205,857,125,885,72,885,63,915,56,940,57,953,78,960,105,963,137,1020,133,1030,137,1112,137,1125,143,1170,144,1197,170,1240,170,1305,226,1375,327,1358,395,1446,412,1443,462,1395,570,1428,576,1428,592,1445,617,1455,610,1479,609,1485,650,1493,678,1508,700,1518,735,1527,743,1568,752,
], 800, 290, 1.96, 2.45)
const east = mapCrop([
  400,8,405,0,470,0,487,18,487,50,482,82,520,97,527,110,528,150,523,185,515,210,558,212,590,238,603,260,630,253,653,250,657,260,685,249,703,258,720,250,742,225,780,215,810,200,822,200,830,230,830,265,853,290,856,305,864,312,850,340,850,358,890,358,908,353,909,373,942,378,948,380,990,378,991,368,1025,366,1045,379,1050,370,1080,388,1082,400,1150,417,1155,395,1151,375,1153,345,1168,332,1180,336,1181,350,1188,352,1182,380,1183,395,1200,398,1198,415,1176,420,1192,430,1191,460,1199,472,1200,510,1204,530,1203,560,1220,585,1205,600,1222,620,1220,630,1240,630,1252,628,1262,642,1261,654,1240,658,1225,655,1212,646,1190,655,1165,672,1160,690,1145,697,1126,694,1118,712,1125,790,1125,850,1130,858,1120,900,1030,923,1022,948,1000,952,980,965,973,983,852,988,843,1036,788,1018,765,1028,757,1024,712,1033,702,1065,650,1057,562,1037,540,1055,470,1136,448,1136,437,1190,460,1193,457,1218,438,1215,453,1240,464,1268,445,1292,398,1310,365,1348,335,1367,290,1377,285,1395,275,1388,263,1398,243,1390,228,1406,222,1390,218,1318,200,1312,192,1325,170,1328,160,1337,140,1340,120,1362,40,1357,32,1372,10,1385,8,1405,
], 1400, 600, 1.96, 1.742)
const south = mapCrop([
  1170,1367,1160,1352,1100,1350,1055,1345,1040,1360,1026,1488,1012,1483,990,1497,975,1485,948,1460,870,1437,840,1435,815,1442,795,1425,770,1420,768,1390,745,1352,720,1347,687,1353,684,1335,693,1290,684,1250,708,1208,708,1175,690,1175,668,1165,650,1152,640,1158,630,1175,628,1195,610,1215,595,1245,585,1235,578,1245,574,1272,560,1262,562,1243,550,1240,543,1210,570,1170,563,1130,547,1115,545,1097,518,1100,453,1140,420,1090,412,1060,388,1037,365,1085,340,1095,320,1097,318,1110,295,1122,275,1118,255,1127,225,1122,222,1100,227,1083,215,1075,215,1060,185,1055,175,1040,180,1022,196,1000,196,985,225,987,218,955,200,950,197,925,183,908,170,905,153,882,135,905,120,963,75,885,60,850,59,812,68,802,87,798,95,768,133,685,150,622,165,628,167,613,190,620,198,632,200,620,213,622,218,595,233,555,230,535,238,483,215,482,200,490,185,480,160,458,150,450,165,425,176,375,140,365,140,355,152,347,142,337,148,280,142,200,147,175,161,165,158,135,163,115,153,50,150,25,112,2,
], 800, 900, 1.96, 2.613)
const outline = 'M' + [...north, ...east, ...south].map((p) => p.join(' ')).join('L') + 'Z'

const stations = [
  ...mapCrop([353,933,443,977,496,1012,539,1041,596,1070,652,1114,748,1239,709,1301,715,1369,770,1389,816,1406,870,1462,1469,1460,1414,1504], 800, 290, 1.96, 2.45),
  ...mapCrop([1068,57,1025,81,1370,83,1282,101,1211,135,1135,112,970,122,885,108,831,107,758,108,685,122,627,156,598,245,623,342,572,394,535,444,496,493,443,504,339,614,262,708,180,773,899,195,899,256,891,355,939,394,939,475,941,562,941,643,892,703,888,778,866,888,811,959,739,1000,680,1071,633,1131,572,1225], 800, 900, 1.96, 2.613),
]
</script>

<style scoped>
.app {
  width: 2880px;
  height: 1576px;
  background: #707070;
  border-radius: 20px;
  overflow: hidden;
  display: flex;
  flex-direction: column;
  font-family: "DejaVu Sans", sans-serif;
  color: #1c1c1c;
}

.titlebar {
  height: 56px;
  flex: none;
  background: #e6e5ea;
  border-bottom: 1px solid #4a4a4a;
  display: flex;
  align-items: center;
  justify-content: center;
  position: relative;
}

.lights {
  position: absolute;
  left: 16px;
  top: 16px;
  display: flex;
  gap: 16px;
}

.lights i {
  width: 24px;
  height: 24px;
  border-radius: 50%;
  background: #cfced2;
  border: 1px solid #b9b8bc;
  box-sizing: border-box;
}

.title {
  font-family: Inter, sans-serif;
  font-size: 26.7px;
  font-weight: 600;
  color: #a9a8ad;
  margin-bottom: 2px;
}

.toolbars {
  height: 237px;
  flex: none;
  display: flex;
  flex-direction: column;
  gap: 4px;
}

.tool-row {
  height: 74px;
  display: flex;
  align-items: center;
}

.tool-icon {
  width: 48px;
  height: 48px;
  flex: none;
  overflow: visible;
}

.tool-icon.dim {
  opacity: 0.28;
}

.tool-icon.active {
  outline: 3px solid #efefef;
  outline-offset: 5px;
  border-radius: 3px;
}

.sep {
  width: 2px;
  height: 20px;
  flex: none;
  background: #aaaaaa;
}

.sep.dark {
  background: #555555;
}

.menu-arrow {
  width: 0;
  height: 0;
  flex: none;
  box-sizing: content-box;
  border-left: 5px solid transparent;
  border-right: 5px solid transparent;
  border-top: 9px solid #b8b8b8;
}

.menu-arrow.low {
  transform: translateY(18px);
}

.workspace {
  height: 1218px;
  flex: none;
  display: flex;
}

.dock {
  flex: none;
  display: flex;
  flex-direction: column;
}

.dock.left {
  width: 638px;
  padding: 0 18px 0 3px;
  box-sizing: border-box;
}

.dock.right {
  width: 543px;
  padding: 0 2px 0 16px;
  box-sizing: border-box;
}

.dock-title {
  height: 28px;
  flex: none;
  display: flex;
  align-items: center;
  justify-content: center;
  padding: 2px 51px 0 0;
  box-sizing: border-box;
  position: relative;
  font-size: 21px;
  color: #262626;
}

.dock.right .dock-title {
  letter-spacing: 0.6px;
}

.close {
  position: absolute;
  right: 4px;
  top: 1px;
  width: 21px;
  height: 21px;
}

.layers-title {
  margin-top: 19px;
}

.dock-tools {
  flex: none;
  display: flex;
  align-items: center;
}

.browser-tools {
  height: 69px;
}

.layer-tools {
  height: 67px;
}

.toolbox-tools {
  height: 67px;
}

.small-icon {
  width: 34px;
  height: 34px;
  flex: none;
  overflow: visible;
}

.tree {
  position: relative;
  box-sizing: border-box;
  background: #b0b0b0;
  border: 2px solid #3a3a3a;
  border-radius: 6px;
  overflow: hidden;
  flex: none;
}

.browser-tree {
  height: 326px;
  padding-top: 2px;
}

.browser-row {
  height: 36px;
  display: flex;
  align-items: center;
  padding-left: 10px;
  font-size: 24px;
}

.twist {
  width: 14px;
  height: 14px;
  flex: none;
  position: relative;
}

.twist.closed::after {
  content: "";
  position: absolute;
  left: 2px;
  top: 2px;
  border-left: 9px solid #6d6d6d;
  border-top: 5px solid transparent;
  border-bottom: 5px solid transparent;
}

.twist.open::after {
  content: "";
  position: absolute;
  left: 1px;
  top: 3px;
  border-top: 9px solid #6d6d6d;
  border-left: 6px solid transparent;
  border-right: 6px solid transparent;
}

.row-icon {
  width: 32px;
  height: 32px;
  flex: none;
}

.browser-row .row-icon {
  margin-left: 15px;
}

.row-text {
  margin-left: 13px;
  white-space: nowrap;
}

.scrollbar {
  position: absolute;
  right: 3px;
  top: 2px;
  bottom: 2px;
  width: 14px;
  border-radius: 5px;
  background: #3a3a3a;
}

.thumb {
  width: 100%;
  background: #707070;
  border-radius: 5px;
  box-sizing: border-box;
  border: 1px solid #3a3a3a;
}

.browser-thumb {
  height: 140px;
}

.layer-tree {
  height: 684px;
}

.layer-row {
  height: 44px;
  display: flex;
  align-items: center;
  padding-left: 46px;
  position: relative;
  font-size: 23.1px;
  font-weight: 700;
  color: #111;
}

.layer-row.selected {
  height: 45px;
  background: #f0f0f0;
}

.check {
  width: 27px;
  height: 27px;
  flex: none;
  box-sizing: border-box;
  border: 2px solid #555;
  border-radius: 6px;
  background: #a8a8a8;
  display: inline-block;
}

.check svg {
  display: block;
  width: 23px;
  height: 23px;
}

.symbol {
  width: 32px;
  height: 32px;
  margin-left: 14px;
  flex: none;
  display: flex;
  align-items: center;
  justify-content: center;
}

.swatch {
  width: 32px;
  height: 32px;
  box-sizing: border-box;
  background: #fdc664;
  border: 1px solid #9b8250;
}

.dot {
  width: 7px;
  height: 7px;
  border-radius: 50%;
  box-sizing: content-box;
}

.dot.pink {
  background: #e8b0dc;
  border: 1px solid #8d7f98;
}

.dot.violet {
  background: #8f84d8;
  border: 1px solid #4a4a80;
}

.layer-name {
  margin-left: 13px;
  white-space: nowrap;
}

.underlined {
  text-decoration: underline;
  text-decoration-thickness: 2px;
  text-underline-offset: 3px;
}

.red-box {
  position: absolute;
  box-sizing: border-box;
  border: 6px solid #ff2a10;
  border-radius: 3px;
  pointer-events: none;
}

.layer-red {
  left: 85px;
  top: 1px;
  width: 413px;
  height: 47px;
}

.search {
  height: 45px;
  flex: none;
  box-sizing: border-box;
  background: #b0b0b0;
  border: 2px solid #3a3a3a;
  border-radius: 6px;
  display: flex;
  align-items: center;
  padding-left: 18px;
  font-size: 24px;
  margin-bottom: 4px;
}

.search-icon {
  width: 26px;
  height: 26px;
  flex: none;
}

.search-text {
  margin-left: 15px;
  flex: 1;
}

.clear {
  width: 26px;
  height: 18px;
  margin-right: 15px;
}

.toolbox-tree {
  height: 1076px;
}

.tb-row {
  height: 36px;
  display: flex;
  align-items: center;
  font-size: 24px;
  position: relative;
  box-sizing: border-box;
}

.tb-row.selected {
  background: #f0f0f0;
  margin-right: 20px;
}

.lv-0 {
  padding-left: 14px;
}

.lv-0 .row-icon {
  margin-left: 19px;
}

.lv-1 {
  padding-left: 87px;
}

.lv-2 {
  padding-left: 127px;
}

.lv-sub {
  height: 32px;
  padding-left: 54px;
}

.lv-sub .row-text {
  margin-left: 20px;
}

.tb-red {
  left: 77px;
  top: -2px;
  width: 153px;
  height: 40px;
}

.tb-scroll {
  right: 1px;
  top: 0;
  bottom: 0;
}

.tb-thumb {
  height: 1033px;
}

.statusbar {
  height: 64px;
  flex: none;
  display: flex;
  align-items: center;
  padding-top: 5px;
  box-sizing: border-box;
  font-size: 21px;
  position: relative;
  z-index: 1;
}

.locator {
  margin-left: 9px;
  width: 426px;
  height: 46px;
  box-sizing: border-box;
  background: #b0b0b0;
  border: 2px solid #3a3a3a;
  border-radius: 6px;
  display: flex;
  align-items: center;
  padding-left: 14px;
  color: #707070;
  font-size: 24px;
  flex: none;
}

.loc-icon {
  width: 26px;
  height: 34px;
  margin-right: 21px;
  flex: none;
}

.st-label {
  flex: none;
  white-space: nowrap;
  color: #1a1a1a;
}

.coord-label {
  margin-left: 687px;
  width: 115px;
}

.coord-input {
  margin-left: 10px;
  width: 213px;
  height: 43px;
  box-sizing: border-box;
  background: #b0b0b0;
  border: 2px solid #3a3a3a;
  border-radius: 6px;
  display: flex;
  align-items: center;
  padding-left: 16px;
  font-size: 19.5px;
  flex: none;
}

.mouse-icon {
  width: 52px;
  height: 36px;
  flex: none;
}

.scale-label {
  margin-left: 20px;
  width: 57px;
}

.dark-field {
  height: 47px;
  box-sizing: border-box;
  flex: none;
  background: linear-gradient(#4c4c4c, #383838);
  border: 2px solid #333;
  border-radius: 6px;
  color: #adadad;
  display: flex;
  align-items: center;
  padding-left: 10px;
  font-size: 20px;
  position: relative;
}

.scale-field {
  margin-left: 9px;
  width: 203px;
}

.combo-arrow {
  position: absolute;
  right: 10px;
  top: 18px;
  border-top: 8px solid #d8d8d8;
  border-left: 4px solid transparent;
  border-right: 4px solid transparent;
}

.spin::before,
.spin::after {
  content: "";
  position: absolute;
  right: 10px;
  border-left: 5px solid transparent;
  border-right: 5px solid transparent;
}

.spin::before {
  top: 7px;
  border-bottom: 8px solid #d8d8d8;
}

.spin::after {
  bottom: 7px;
  border-top: 8px solid #d8d8d8;
}

.lock-icon {
  width: 72px;
  height: 32px;
  flex: none;
}

.mag-label {
  width: 98px;
}

.mag-field {
  margin-left: 9px;
  width: 181px;
}

.rot-label {
  margin-left: 21px;
  width: 87px;
}

.rot-field {
  margin-left: 21px;
  width: 185px;
}

.render-check {
  margin-left: 15px;
  width: 27px;
  height: 27px;
}

.render-label {
  margin-left: 13px;
  width: 73px;
}

.epsg {
  margin-left: 17px;
  width: 191px;
  height: 48px;
  flex: none;
  box-sizing: border-box;
  background: linear-gradient(#b4b4b4, #8e8e8e);
  border: 2px solid #3f3f3f;
  border-radius: 6px;
  display: flex;
  align-items: center;
  padding-left: 10px;
  gap: 6px;
  font-size: 21px;
}

.epsg svg {
  width: 30px;
  height: 30px;
  flex: none;
}

.msg-icon {
  margin-left: 20px;
  width: 34px;
  height: 32px;
  flex: none;
}

.map {
  display: block;
  width: 1699px;
  height: 1218px;
}

.canvas {
  width: 1699px;
  flex: none;
  background: #fff;
}
</style>

<style>
body {
  background: #fff;
}
</style>
